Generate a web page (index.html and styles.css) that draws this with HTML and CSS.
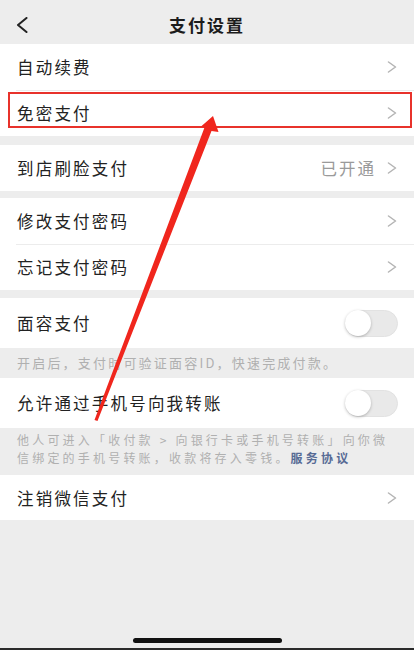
FILE: index.html
```html
<!DOCTYPE html>
<html lang="zh-CN">
<head>
<meta charset="utf-8">
<title>支付设置</title>
<link rel="stylesheet" href="styles.css">
</head>
<body>
<div class="screen">
  <header class="navbar">
    <span class="back">
      <svg width="12" height="16" viewBox="0 0 12 16"><polyline points="10.5,1 2,8 10.5,15" fill="none" stroke="#222" stroke-width="2" stroke-linecap="round" stroke-linejoin="round"/></svg>
    </span>
    <h1 class="title">支付设置</h1>
  </header>

  <section class="group">
    <div class="row"><span class="label">自动续费</span><span class="arrow"><svg width="10" height="12" viewBox="0 0 10 12"><polyline points="1.5,1 8.5,6 1.5,11" fill="none" stroke="#b4b4b4" stroke-width="1.5" stroke-linecap="round" stroke-linejoin="round"/></svg></span></div>
    <div class="row sep"><span class="label">免密支付</span><span class="arrow"><svg width="10" height="12" viewBox="0 0 10 12"><polyline points="1.5,1 8.5,6 1.5,11" fill="none" stroke="#b4b4b4" stroke-width="1.5" stroke-linecap="round" stroke-linejoin="round"/></svg></span></div>
  </section>

  <section class="group g2">
    <div class="row"><span class="label">到店刷脸支付</span><span class="value">已开通</span><span class="arrow"><svg width="10" height="12" viewBox="0 0 10 12"><polyline points="1.5,1 8.5,6 1.5,11" fill="none" stroke="#b4b4b4" stroke-width="1.5" stroke-linecap="round" stroke-linejoin="round"/></svg></span></div>
  </section>

  <section class="group g3">
    <div class="row"><span class="label">修改支付密码</span><span class="arrow"><svg width="10" height="12" viewBox="0 0 10 12"><polyline points="1.5,1 8.5,6 1.5,11" fill="none" stroke="#b4b4b4" stroke-width="1.5" stroke-linecap="round" stroke-linejoin="round"/></svg></span></div>
    <div class="row sep"><span class="label">忘记支付密码</span><span class="arrow"><svg width="10" height="12" viewBox="0 0 10 12"><polyline points="1.5,1 8.5,6 1.5,11" fill="none" stroke="#b4b4b4" stroke-width="1.5" stroke-linecap="round" stroke-linejoin="round"/></svg></span></div>
  </section>

  <section class="group g4">
    <div class="row tall"><span class="label">面容支付</span><span class="switch"><span class="knob"></span></span></div>
  </section>
  <p class="note one">开启后，支付时可验证面容ID，快速完成付款。</p>

  <section class="group">
    <div class="row tall"><span class="label">允许通过手机号向我转账</span><span class="switch"><span class="knob"></span></span></div>
  </section>
  <p class="note two">他人可进入「收付款 &gt; 向银行卡或手机号转账」向你微<br>信绑定的手机号转账，收款将存入零钱。<a class="link">服务协议</a></p>

  <section class="group">
    <div class="row last"><span class="label">注销微信支付</span><span class="arrow"><svg width="10" height="12" viewBox="0 0 10 12"><polyline points="1.5,1 8.5,6 1.5,11" fill="none" stroke="#b4b4b4" stroke-width="1.5" stroke-linecap="round" stroke-linejoin="round"/></svg></span></div>
  </section>

  <div class="home"><span class="home-bar"></span></div>

  <svg class="annotation" width="414" height="650" viewBox="0 0 414 650">
    <rect x="9" y="93" width="402" height="34" fill="none" stroke="#e8322b" stroke-width="2"/>
    <polygon points="94.5,420 97.5,421 211.5,131 218.5,132 213,116 201,126.5 204.5,127.5" fill="#f0261d"/>
  </svg>
</div>
</body>
</html>
```

FILE: styles.css
```css
* { box-sizing: border-box; }
html, body { margin: 0; padding: 0; }
body {
  background: #ededed;
  font-family: "Noto Sans CJK SC", "Noto Sans", sans-serif;
  color: #1f1f1f;
}
.screen {
  position: relative;
  width: 414px;
  height: 650px;
  display: flex;
  flex-direction: column;
  background: #ededed;
  border-bottom: 2px solid #2b2b2b;
  overflow: hidden;
}
.navbar {
  height: 44px;
  display: flex;
  align-items: center;
  justify-content: center;
  position: relative;
  background: #ededed;
}
.back {
  position: absolute;
  left: 16px;
  top: 17px;
  display: flex;
}
.title {
  margin: 0;
  font-size: 17px;
  font-weight: 600;
  letter-spacing: 2px;
  color: #1c1c1c;
  padding-top: 4px;
}
.group { background: #fff; }
.g2 { margin-top: 9px; }
.g3 { margin-top: 7px; }
.g4 { margin-top: 8px; }
.row {
  height: 46px;
  display: flex;
  align-items: center;
  padding: 0 17px;
  position: relative;
}
.row.tall { height: 50px; padding-right: 16px; }
.row.last { height: 45px; }
.row.sep::before {
  content: "";
  position: absolute;
  left: 16px;
  right: 0;
  top: 0;
  height: 1px;
  background: #ececec;
}
.label {
  flex: 1;
  font-size: 16.5px;
  letter-spacing: 2.2px;
  color: #222;
}
.value {
  font-size: 16.5px;
  letter-spacing: 2px;
  color: #9a9a9a;
  margin-right: 11px;
}
.arrow { display: flex; }
.switch {
  width: 53px;
  height: 27px;
  border-radius: 14px;
  background: #e9e9e9;
  border: 1px solid #e2e2e2;
  position: relative;
  display: flex;
  align-items: center;
}
.knob {
  width: 26px;
  height: 26px;
  border-radius: 50%;
  background: #fff;
  box-shadow: 0 1px 3px rgba(0,0,0,0.25);
  margin-left: -1px;
}
.note {
  margin: 0;
  padding: 0 17px;
  font-size: 13px;
  letter-spacing: 2.2px;
  color: #b0b0b0;
}
.note.one {
  height: 30px;
  line-height: 30px;
}
.note.two {
  height: 47px;
  padding-top: 3px;
  line-height: 17.5px;
  font-size: 12px;
  letter-spacing: 3.2px;
}
.link {
  color: #576b95;
  font-weight: 600;
}
.home {
  margin-top: auto;
  display: flex;
  justify-content: center;
  padding-bottom: 5px;
}
.home-bar {
  width: 149px;
  height: 5px;
  border-radius: 3px;
  background: #111;
}
.annotation {
  position: absolute;
  left: 0;
  top: 0;
  pointer-events: none;
}
```
